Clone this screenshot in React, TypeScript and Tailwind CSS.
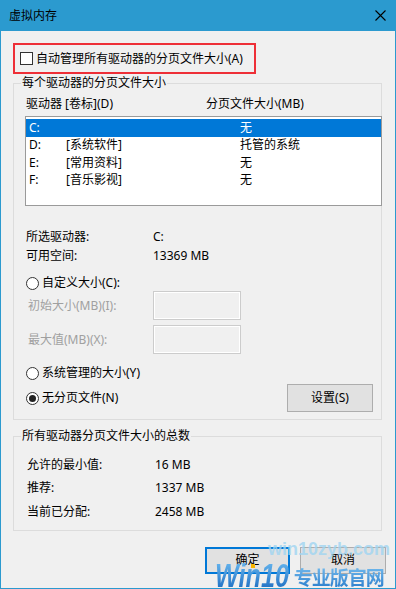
import React from "react";

function Radio({ checked }: { checked?: boolean }) {
  return (
    <span className="w-[13px] h-[13px] rounded-full border border-[#333] bg-white flex items-center justify-center shrink-0">
      {checked && <span className="w-[7px] h-[7px] rounded-full bg-[#222]" />}
    </span>
  );
}

export default function App() {
  const rows = [
    { d: "C:", l: "", s: "无", sel: true },
    { d: "D:", l: "[系统软件]", s: "托管的系统" },
    { d: "E:", l: "[常用资料]", s: "无" },
    { d: "F:", l: "[音乐影视]", s: "无" },
  ];
  return (
    <div className="relative w-[396px] h-[589px] overflow-hidden bg-[#f0f0f0] border-x border-b border-[#2b9acf] flex flex-col text-[12px] leading-[16px] text-black font-['Noto_Sans','Noto_Sans_CJK_SC',sans-serif]">
      {/* title bar */}
      <div className="h-[31px] shrink-0 bg-[#2b9acf] flex items-center justify-between pl-[8px] pr-[9px]">
        <span className="text-[12px] text-black">虚拟内存</span>
        <svg width="11" height="11" viewBox="0 0 11 11">
          <path d="M0.5 0.5 L10.5 10.5 M10.5 0.5 L0.5 10.5" stroke="#000" strokeWidth="1.1" />
        </svg>
      </div>

      <div className="px-[12px] flex flex-col">
        {/* red highlighted checkbox */}
        <div className="mt-[12px] h-[31px] w-[243px] border-2 border-[#ee2f37] flex items-center pl-[5px]">
          <span className="w-[13px] h-[13px] border border-[#333] bg-white shrink-0" />
          <span className="ml-[3px]">自动管理所有驱动器的分页文件大小(A)</span>
        </div>

        {/* group 1 */}
        <fieldset className="mt-[1px] w-[369px] border border-[#dcdcdc] pb-[7px]">
          <legend className="ml-[7px] px-[1px] leading-[16px]">每个驱动器的分页文件大小</legend>
          <div className="mt-[5px] h-[16px] flex pl-[12px]">
            <span className="w-[180px]">驱动器 [卷标](D)</span>
            <span>分页文件大小(MB)</span>
          </div>
          <div className="mt-[4px] ml-[11px] mr-[-1px] h-[90px] border border-[#9a9a9a] bg-white pt-[2px]">
            {rows.map((r) => (
              <div
                key={r.d}
                className={
                  "h-[17.5px] flex items-center pl-[3px] " +
                  (r.sel ? "bg-[#0078d7] text-white" : "text-black")
                }
              >
                <span className="w-[37px]">{r.d}</span>
                <span className="w-[174px]">{r.l}</span>
                <span>{r.s}</span>
              </div>
            ))}
          </div>

          <div className="mt-[21px] pl-[12px]">
            <div className="h-[19px] flex items-center">
              <span className="w-[127px]">所选驱动器:</span>
              <span>C:</span>
            </div>
            <div className="h-[19px] flex items-center">
              <span className="w-[127px]">可用空间:</span>
              <span>13369 MB</span>
            </div>
          </div>

          <div className="mt-[10px] h-[16px] flex items-center pl-[12px]">
            <Radio />
            <span className="ml-[3px]">自定义大小(C):</span>
          </div>

          <div className="h-[29px] flex items-center pl-[14px]">
            <span className="w-[125px] text-[#a0a0a0]">初始大小(MB)(I):</span>
            <span className="w-[88px] h-[29px] border border-[#cccccc] bg-[#f0f0f0] shadow-[inset_0_0_0_1px_#ffffff]" />
          </div>
          <div className="mt-[5px] h-[29px] flex items-center pl-[14px]">
            <span className="w-[125px] text-[#a0a0a0]">最大值(MB)(X):</span>
            <span className="w-[88px] h-[29px] border border-[#cccccc] bg-[#f0f0f0] shadow-[inset_0_0_0_1px_#ffffff]" />
          </div>

          <div className="mt-[11px] h-[16px] flex items-center pl-[12px]">
            <Radio />
            <span className="ml-[3px]">系统管理的大小(Y)</span>
          </div>

          <div className="mt-[3px] h-[28px] flex items-center justify-between pl-[12px] pr-[8px]">
            <div className="flex items-center">
              <Radio checked />
              <span className="ml-[3px]">无分页文件(N)</span>
            </div>
            <div className="w-[86px] h-[28px] border border-[#adadad] bg-[#e1e1e1] flex items-center justify-center">
              设置(S)
            </div>
          </div>
        </fieldset>

        {/* group 2 */}
        <fieldset className="mt-[8px] w-[369px] border border-[#dcdcdc] pb-[6px]">
          <legend className="ml-[7px] px-[1px] leading-[16px]">所有驱动器分页文件大小的总数</legend>
          <div className="mt-[9px] pl-[13px]">
            <div className="h-[23.5px] flex items-center">
              <span className="w-[128px]">允许的最小值:</span>
              <span>16 MB</span>
            </div>
            <div className="h-[23.5px] flex items-center">
              <span className="w-[128px]">推荐:</span>
              <span>1337 MB</span>
            </div>
            <div className="h-[23.5px] flex items-center">
              <span className="w-[128px]">当前已分配:</span>
              <span>2458 MB</span>
            </div>
          </div>
        </fieldset>
      </div>

      {/* buttons */}
      <div className="mt-[16px] flex justify-end gap-[10px] pr-[9px]">
        <div className="w-[85px] h-[27px] border-2 border-[#0078d7] bg-[#e1e1e1] flex items-center justify-center">
          确定
        </div>
        <div className="w-[86px] h-[27px] border border-[#adadad] bg-[#e1e1e1] flex items-center justify-center">
          取消
        </div>
      </div>

      {/* watermark */}
      <span className="absolute left-[267px] top-[539px] text-[18px] leading-[20px] font-bold text-[#9fd5f2]/80 font-['Liberation_Sans',sans-serif]">
        win10zyb.com
      </span>
      <span className="absolute left-[250px] top-[564px] w-[4px] h-[4px] bg-[#f7b500]" />
      <div className="absolute left-[214px] top-[559px] flex items-end whitespace-nowrap">
        <span className="inline-block origin-left scale-x-[0.74] pr-[4px] mr-[-25px] text-[34px] leading-[32px] italic font-bold bg-linear-to-b from-[#6cbcf2] to-[#1a6cc0] bg-clip-text text-transparent font-['Liberation_Sans',sans-serif]">
          Win10
        </span>
        <span className="text-[19px] leading-[28px] font-bold bg-linear-to-b from-[#7cc3f2] to-[#2077c8] bg-clip-text text-transparent font-['Noto_Sans_CJK_SC',sans-serif] tracking-[-1px]">
          专业版官网
        </span>
      </div>
    </div>
  );
}
